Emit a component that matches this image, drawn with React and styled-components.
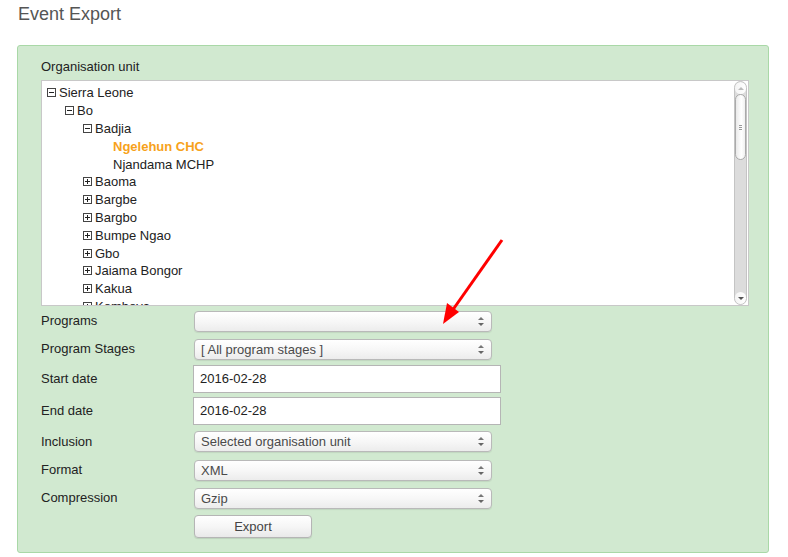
import React from "react";
import styled, { createGlobalStyle } from "styled-components";

const Global = createGlobalStyle`
  html, body { margin: 0; padding: 0; background: #fff; }
  body { font-family: "Liberation Sans", Arial, sans-serif; font-size: 13px; color: #222; }
`;

const Page = styled.div`
  position: relative;
  width: 788px;
  height: 557px;
  overflow: hidden;
`;

const Title = styled.h1`
  margin: 0;
  padding: 2px 0 0 18px;
  height: 45px;
  box-sizing: border-box;
  font-size: 18px;
  font-weight: normal;
  color: #555;
  line-height: 24px;
`;

const Panel = styled.div`
  margin-left: 17px;
  width: 752px;
  height: 508px;
  box-sizing: border-box;
  background: #d1e9d0;
  border: 1px solid #a9d8a7;
  border-radius: 3px;
  padding: 13px 20px 0 23px;
`;

const SectionLabel = styled.div`
  font-size: 13px;
  line-height: 16px;
  height: 21px;
`;

const TreeBox = styled.div`
  display: flex;
  width: 708px;
  height: 226px;
  box-sizing: border-box;
  background: #fff;
  border: 1px solid #c8c8c8;
`;

const TreeList = styled.ul`
  flex: 1;
  list-style: none;
  margin: 0;
  padding: 3px 0 0 5px;
  overflow: hidden;
`;

const TreeItem = styled.li`
  display: flex;
  align-items: center;
  height: 17.8px;
  padding-left: ${(p) => p.$level * 18}px;
  font-size: 13px;
  color: ${(p) => (p.$selected ? "#f7a21b" : "#222")};
  font-weight: ${(p) => (p.$selected ? "bold" : "normal")};
  white-space: nowrap;
`;

const Toggle = styled.span`
  position: relative;
  display: inline-block;
  width: 9px;
  height: 9px;
  box-sizing: border-box;
  border: 1px solid #444;
  margin-right: 3px;
  flex: none;
  &::before {
    content: "";
    position: absolute;
    left: 1px;
    right: 1px;
    top: 3px;
    height: 1px;
    background: #222;
  }
  &::after {
    content: "";
    display: ${(p) => (p.$open ? "none" : "block")};
    position: absolute;
    top: 1px;
    bottom: 1px;
    left: 3px;
    width: 1px;
    background: #222;
  }
`;

const Spacer = styled.span`
  display: inline-block;
  width: 12px;
  flex: none;
`;

const Scrollbar = styled.div`
  width: 13px;
  margin-right: 1px;
  display: flex;
  flex-direction: column;
  background: #dcdcdc;
  border: 1px solid #c4c4c4;
  border-radius: 7px;
  box-sizing: border-box;
  overflow: hidden;
`;

const ScrollArrow = styled.div`
  height: 12px;
  flex: none;
  display: flex;
  align-items: center;
  justify-content: center;
  background: linear-gradient(to right, #f4f4f4, #ffffff);
  border-radius: 6px;
  &::after {
    content: "";
    border-left: 3px solid transparent;
    border-right: 3px solid transparent;
    ${(p) => (p.$down ? "border-top: 3px solid #555;" : "border-bottom: 3px solid #bbb;")}
  }
`;

const Thumb = styled.div`
  height: 66px;
  flex: none;
  box-sizing: border-box;
  border: 1px solid #aaa;
  border-radius: 6px;
  background: linear-gradient(to right, #eaeaea, #ffffff 60%, #f0f0f0);
  display: flex;
  flex-direction: column;
  align-items: center;
  justify-content: center;
  gap: 1px;
  span {
    width: 3px;
    height: 1px;
    background: #999;
  }
`;

const Track = styled.div`
  flex: 1;
`;

const Form = styled.div`
  display: grid;
  grid-template-columns: 152px auto;
  align-items: center;
  margin-top: 1px;
`;

const Label = styled.div`
  font-size: 13px;
  height: ${(p) => p.$h}px;
  line-height: ${(p) => p.$h}px;
`;

const Cell = styled.div`
  height: ${(p) => p.$h}px;
  display: flex;
  align-items: center;
`;

const SelectBox = styled.div`
  position: relative;
  width: 298px;
  height: 21px;
  box-sizing: border-box;
  margin-left: 1px;
  border: 1px solid #b9b9b9;
  border-radius: 4px;
  background: linear-gradient(#ffffff, #f7f7f7 50%, #ececec);
  box-shadow: 0 1px 1px rgba(0, 0, 0, 0.08);
  padding: 0 20px 0 6px;
  font-size: 13px;
  line-height: 19px;
  color: #4a4a4a;
`;

const Arrows = styled.span`
  position: absolute;
  right: 7px;
  top: 5px;
  display: flex;
  flex-direction: column;
  gap: 3px;
  &::before, &::after {
    content: "";
    border-left: 3px solid transparent;
    border-right: 3px solid transparent;
  }
  &::before { border-bottom: 3px solid #777; }
  &::after { border-top: 3px solid #666; }
`;

const TextInput = styled.div`
  width: 308px;
  height: 28px;
  box-sizing: border-box;
  border: 1px solid #b5b5b5;
  background: #fff;
  padding: 0 6px;
  font-size: 13px;
  line-height: 26px;
  color: #222;
`;

const Button = styled.button`
  width: 118px;
  height: 23px;
  margin-left: 1px;
  box-sizing: border-box;
  border: 1px solid #b5b5b5;
  border-radius: 4px;
  background: linear-gradient(#ffffff, #f6f6f6 50%, #e9e9e9);
  box-shadow: 0 1px 1px rgba(0, 0, 0, 0.1);
  font-family: "Liberation Sans", Arial, sans-serif;
  font-size: 13px;
  color: #444;
  padding: 0;
`;

const ArrowOverlay = styled.svg`
  position: absolute;
  left: 0;
  top: 0;
  pointer-events: none;
`;

const tree = [
  { name: "Sierra Leone", level: 0, toggle: "open" },
  { name: "Bo", level: 1, toggle: "open" },
  { name: "Badjia", level: 2, toggle: "open" },
  { name: "Ngelehun CHC", level: 3, selected: true },
  { name: "Njandama MCHP", level: 3 },
  { name: "Baoma", level: 2, toggle: "closed" },
  { name: "Bargbe", level: 2, toggle: "closed" },
  { name: "Bargbo", level: 2, toggle: "closed" },
  { name: "Bumpe Ngao", level: 2, toggle: "closed" },
  { name: "Gbo", level: 2, toggle: "closed" },
  { name: "Jaiama Bongor", level: 2, toggle: "closed" },
  { name: "Kakua", level: 2, toggle: "closed" },
  { name: "Komboya", level: 2, toggle: "closed" },
];

const Select = ({ value }) => (
  <SelectBox>
    {value}
    <Arrows />
  </SelectBox>
);

const rows = [
  { label: "Programs", h: 28, el: <Select value="" /> },
  { label: "Program Stages", h: 28, el: <Select value="[ All program stages ]" /> },
  { label: "Start date", h: 32, el: <TextInput>2016-02-28</TextInput> },
  { label: "End date", h: 32, el: <TextInput>2016-02-28</TextInput> },
  { label: "Inclusion", h: 29, el: <Select value="Selected organisation unit" /> },
  { label: "Format", h: 28, el: <Select value="XML" /> },
  { label: "Compression", h: 28, el: <Select value="Gzip" /> },
  { label: "", h: 28, el: <Button>Export</Button> },
];

export default function App() {
  return (
    <Page>
      <Global />
      <Title>Event Export</Title>
      <Panel>
        <SectionLabel>Organisation unit</SectionLabel>
        <TreeBox>
          <TreeList>
            {tree.map((t) => (
              <TreeItem key={t.name} $level={t.level} $selected={t.selected}>
                {t.toggle ? <Toggle $open={t.toggle === "open"} /> : <Spacer />}
                {t.name}
              </TreeItem>
            ))}
          </TreeList>
          <Scrollbar>
            <ScrollArrow />
            <Thumb>
              <span />
              <span />
              <span />
            </Thumb>
            <Track />
            <ScrollArrow $down />
          </Scrollbar>
        </TreeBox>
        <Form>
          {rows.map((r, i) => (
            <React.Fragment key={i}>
              <Label $h={r.h}>{r.label}</Label>
              <Cell $h={r.h}>{r.el}</Cell>
            </React.Fragment>
          ))}
        </Form>
      </Panel>
      <ArrowOverlay width="788" height="557" viewBox="0 0 788 557">
        <line x1="502" y1="240" x2="452" y2="311" stroke="#f00" strokeWidth="3" />
        <polygon points="443,324 447,303 459,312" fill="#f00" />
      </ArrowOverlay>
    </Page>
  );
}
